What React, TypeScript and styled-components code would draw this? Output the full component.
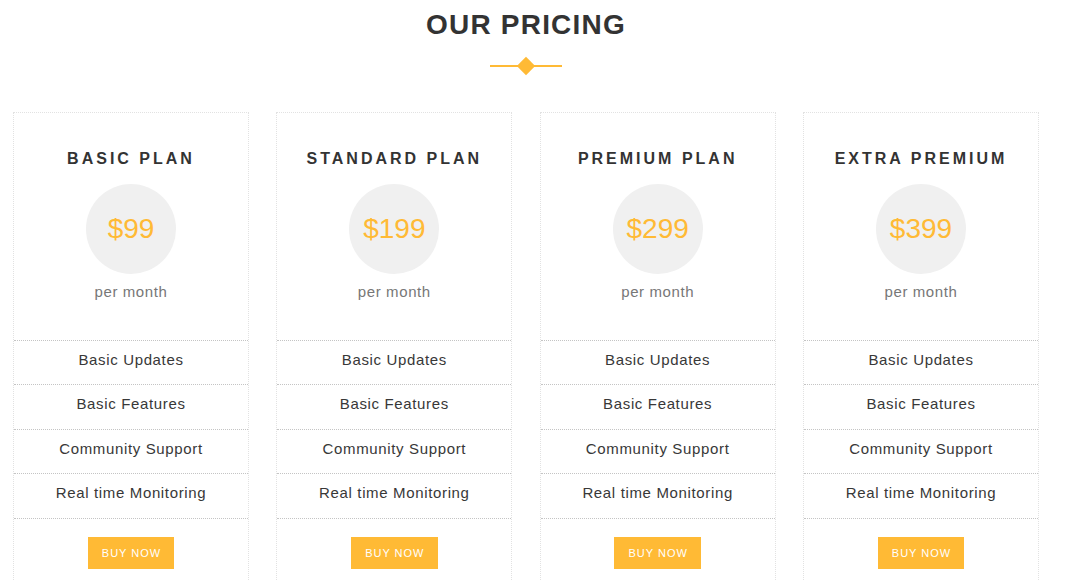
import React from "react";
import styled, { createGlobalStyle } from "styled-components";

const GlobalStyle = createGlobalStyle`
  html, body {
    margin: 0;
    padding: 0;
    background: #ffffff;
  }
  body {
    font-family: "Liberation Sans", Arial, sans-serif;
    overflow: hidden;
  }
`;

const ACCENT = "#ffba35";

const Section = styled.section`
  width: 1052px;
  box-sizing: border-box;
  padding: 5px 13px 0;
`;

const Heading = styled.h2`
  margin: 0;
  text-align: center;
  font-size: 28px;
  line-height: 40px;
  font-weight: 700;
  letter-spacing: 1.2px;
  color: #333333;
  text-transform: uppercase;
`;

const Divider = styled.div`
  position: relative;
  width: 72px;
  height: 2px;
  margin: 20px auto 0;
  background: ${ACCENT};

  &::after {
    content: "";
    position: absolute;
    left: 50%;
    top: 50%;
    width: 13px;
    height: 13px;
    background: ${ACCENT};
    transform: translate(-50%, -50%) rotate(45deg);
  }
`;

const Grid = styled.div`
  display: grid;
  grid-template-columns: repeat(4, 1fr);
  column-gap: 27.33px;
  margin-top: 45px;
`;

const Card = styled.div`
  border: 1px dotted #e2e2e2;
  text-align: center;
  padding-bottom: 40px;
`;

const CardHead = styled.div`
  padding: 36px 0 38px;
  display: flex;
  flex-direction: column;
  align-items: center;
`;

const PlanName = styled.h3`
  margin: 0;
  font-size: 16px;
  line-height: 20px;
  font-weight: 700;
  letter-spacing: 3px;
  color: #333333;
  text-transform: uppercase;
`;

const PriceCircle = styled.div`
  margin-top: 15px;
  width: 90px;
  height: 90px;
  border-radius: 50%;
  background: #f0f0f0;
  display: flex;
  align-items: center;
  justify-content: center;
  font-size: 28px;
  color: ${ACCENT};
`;

const Period = styled.div`
  margin-top: 8px;
  font-size: 15px;
  line-height: 20px;
  letter-spacing: 0.6px;
  color: #777777;
`;

const Features = styled.ul`
  list-style: none;
  margin: 0;
  padding: 0;
  border-top: 1px dotted #c4c4c4;
`;

const Feature = styled.li`
  padding: 8px 0 14px;
  font-size: 15px;
  line-height: 21.43px;
  letter-spacing: 0.65px;
  color: #383838;
  border-bottom: 1px dotted #c4c4c4;
`;

const BuyButton = styled.button`
  margin-top: 18px;
  height: 32px;
  padding: 0 13px 0 14px;
  border: none;
  border-radius: 0;
  background: ${ACCENT};
  color: #ffffff;
  font-family: "Liberation Sans", Arial, sans-serif;
  font-size: 11px;
  letter-spacing: 1px;
  text-transform: uppercase;
  cursor: pointer;
`;

const plans = [
  { name: "Basic Plan", price: "$99" },
  { name: "Standard Plan", price: "$199" },
  { name: "Premium Plan", price: "$299" },
  { name: "Extra Premium", price: "$399" },
];

const features = [
  "Basic Updates",
  "Basic Features",
  "Community Support",
  "Real time Monitoring",
];

export default function App() {
  return (
    <>
      <GlobalStyle />
      <Section>
        <Heading>Our Pricing</Heading>
        <Divider />
        <Grid>
          {plans.map((p) => (
            <Card key={p.name}>
              <CardHead>
                <PlanName>{p.name}</PlanName>
                <PriceCircle>{p.price}</PriceCircle>
                <Period>per month</Period>
              </CardHead>
              <Features>
                {features.map((f) => (
                  <Feature key={f}>{f}</Feature>
                ))}
              </Features>
              <BuyButton>Buy Now</BuyButton>
            </Card>
          ))}
        </Grid>
      </Section>
    </>
  );
}
